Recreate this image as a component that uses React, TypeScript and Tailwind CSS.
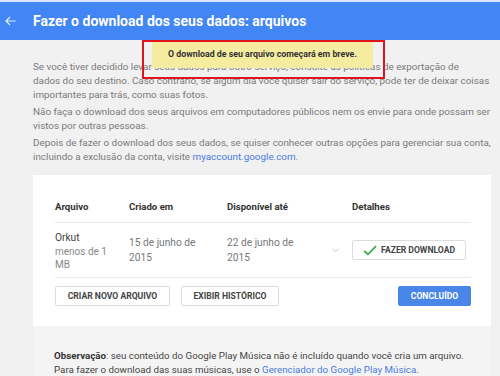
const font = { fontFamily: 'Roboto, "Liberation Sans", sans-serif' };

const cols = 'grid grid-cols-[74px_98px_105px_20px_1fr]';

const TableHeader = () => (
  <div className={`${cols} border-b border-[#e8e8e8] pb-[8px] text-[9.6px] leading-[14px] font-bold text-[#333]`}>
    <div>Arquivo</div>
    <div>Criado em</div>
    <div>Disponível até</div>
    <div />
    <div>Detalhes</div>
  </div>
);

const ArchiveRow = () => (
  <div className={`${cols} h-[55px] items-center border-b border-[#e8e8e8]`}>
    <div className="pt-[2px]">
      <div className="text-[10.2px] leading-[14px] text-[#444]">Orkut</div>
      <div className="text-[10px] leading-[13px] text-[#888]">menos de 1</div>
      <div className="text-[10px] leading-[13px] text-[#888]">MB</div>
    </div>
    <div className="text-[10.2px] leading-[15px] text-[#777]">
      15 de junho de
      <br />
      2015
    </div>
    <div className="text-[10.2px] leading-[15px] text-[#777]">
      22 de junho de
      <br />
      2015
    </div>
    <div className="flex">
      <svg width="7" height="5" viewBox="0 0 7 5">
        <path d="M0.5 0.8 L3.5 3.8 L6.5 0.8" fill="none" stroke="#c4c4c4" strokeWidth="1" />
      </svg>
    </div>
    <div>
      <button className="flex h-[20px] w-[114px] items-center justify-center gap-[4px] rounded-[2px] border border-[#dcdcdc] bg-white text-[8.6px] font-bold text-[#444]">
        <svg width="14" height="11" viewBox="0 0 14 11">
          <path d="M1.2 6 L5 9.3 L13 1.2" fill="none" stroke="#3da94c" strokeWidth="1.8" />
        </svg>
        FAZER DOWNLOAD
      </button>
    </div>
  </div>
);

export default function App() {
  return (
    <div
      className="relative h-[376px] w-[500px] overflow-hidden bg-[#f1f1f1]"
      style={font}
    >
      <div className="flex h-10 items-center border-t-2 border-[#dde6f7] bg-[#4285f4] text-white">
        <div className="w-[33px] pl-[5px]">
          <svg width="11" height="10" viewBox="0 0 11 10">
            <path d="M10.5 5 H1 M5 1 L1 5 L5 9" fill="none" stroke="#e6eefc" strokeWidth="1.2" />
          </svg>
        </div>
        <span className="text-[14px] font-bold">
          Fazer o download dos seus dados: arquivos
        </span>
      </div>

      <div className="pl-[33px] pr-[9px] pt-[20px]">
        <div className="space-y-[3px] whitespace-nowrap text-[9.85px] leading-[14px] text-[#7a7a7a]">
          <p>
            Se você tiver decidido levar seus dados para outro serviço, consulte as políticas de exportação de
            <br />
            dados do seu destino. Caso contrário, se algum dia você quiser sair do serviço, pode ter de deixar coisas
            <br />
            importantes para trás, como suas fotos.
          </p>
          <p>
            Não faça o download dos seus arquivos em computadores públicos nem os envie para onde possam ser
            <br />
            vistos por outras pessoas.
          </p>
          <p>
            Depois de fazer o download dos seus dados, se quiser conhecer outras opções para gerenciar sua conta,
            <br />
            incluindo a exclusão da conta, visite <span className="text-[#4a7be0]">myaccount.google.com</span>.
          </p>
        </div>

        <div className="mt-[11px]">
          <div className="bg-white pb-[20px] pl-[22px] pr-[20px] pt-[25px]">
            <TableHeader />
            <ArchiveRow />
            <div className="mt-[8px] flex items-center gap-[11px]">
              <button className="h-[20px] w-[115px] rounded-[2px] border border-[#dcdcdc] bg-white text-[8.6px] font-bold text-[#444]">
                CRIAR NOVO ARQUIVO
              </button>
              <button className="h-[20px] w-[98px] rounded-[2px] border border-[#dcdcdc] bg-white text-[8.6px] font-bold text-[#444]">
                EXIBIR HISTÓRICO
              </button>
              <button className="ml-auto h-[20px] w-[73px] rounded-[2px] bg-[#4a86e8] text-[8.6px] font-bold text-white">
                CONCLUÍDO
              </button>
            </div>
          </div>
          <div className="bg-[#f4f4f4] pl-[21px] pr-[4px] pb-[10px] pt-[23px] text-[9.75px] leading-[14px] text-[#444]">
            <p className="whitespace-nowrap">
              <span className="font-bold text-[#333]">Observação</span>: seu conteúdo do Google Play Música não é incluído quando você cria um arquivo.
              <br />
              Para fazer o download das suas músicas, use o{' '}
              <span className="text-[#4a7be0]">Gerenciador do Google Play Música</span>.
            </p>
          </div>
        </div>
      </div>

      <div className="absolute left-[142px] top-[40px] h-[39px] w-[243px] border-2 border-[#e0141e]">
        <div className="ml-[8px] flex h-[26px] w-[221px] items-center justify-center bg-[#f6eca0] text-[8.8px] font-bold text-[#333]">
          O download de seu arquivo começará em breve.
        </div>
      </div>
    </div>
  );
}
